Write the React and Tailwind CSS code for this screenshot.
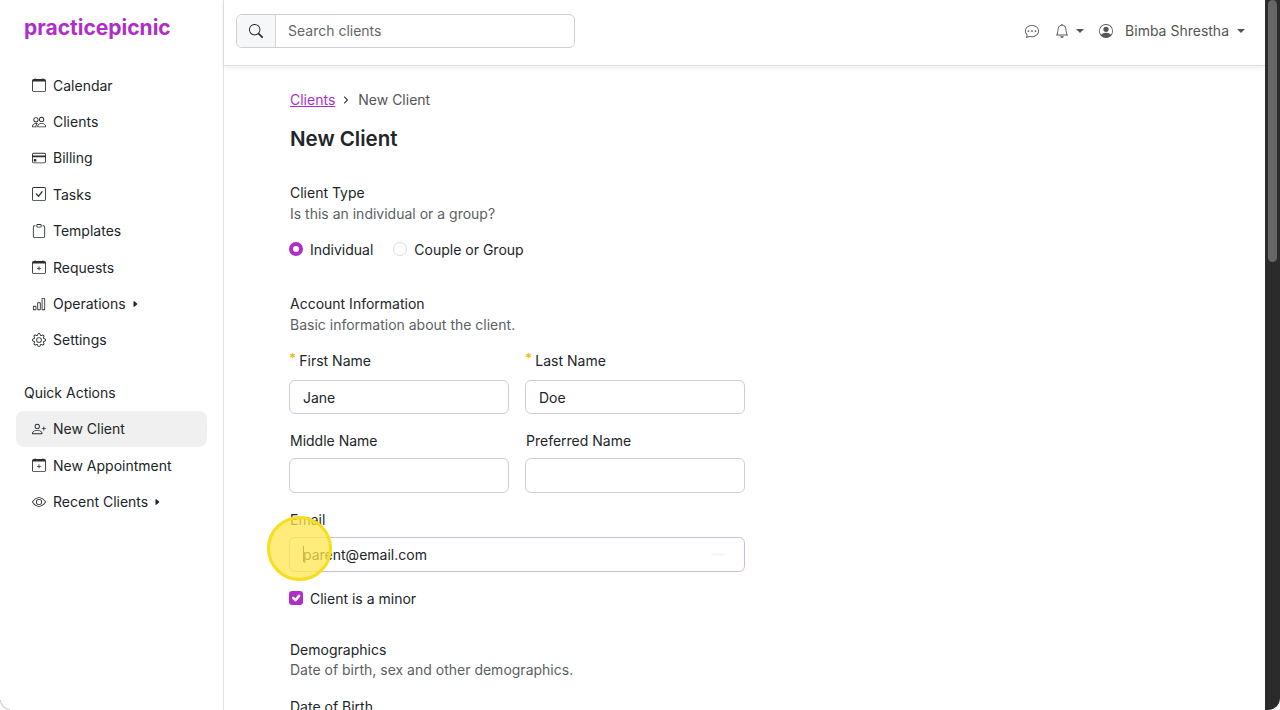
import React from "react";
import { BsCalendar, BsPeople, BsCreditCard, BsCheckSquare, BsClipboard, BsCalendarPlus, BsBarChart, BsGear, BsPersonPlus, BsEye, BsChatDots, BsBell, BsPersonCircle, BsSearch, BsCaretRightFill, BsChevronRight, BsCheck } from "react-icons/bs";

function NavRow({ icon: Icon, label, caret, active }) {
  return (
    <div className={"flex items-center h-[36.4px] pl-4 pr-2 rounded-lg " + (active ? "bg-[#f0f0f0]" : "")}>
      <Icon className="w-[14px] h-[14px] text-[#2b2f33] shrink-0" />
      <span className="ml-[7px] text-[14px] text-[#212529]">{label}</span>
      {caret && <BsCaretRightFill className="ml-[5px] w-[8px] h-[8px] text-[#212529]" />}
    </div>
  );
}

function Caret({ className }) {
  return <span className={"w-0 h-0 border-x-[4px] border-x-transparent border-t-[4px] border-t-[#555] " + className} />;
}

function Field({ label, required, value, inputClass }) {
  return (
    <div className="w-[220px]">
      <div className={"h-[22px] flex items-center text-[14px] text-[#212529] " + (required ? "" : "pl-px")}>
        {required && <span className="text-[#f5b921] mr-[3px] text-[13px] font-bold leading-none -mt-[3px]">*</span>}
        {label}
      </div>
      <input readOnly value={value} className={"block w-full px-[13px] text-[14px] text-[#212529] border border-[#cfcfcf] rounded-md bg-white outline-none " + inputClass} />
    </div>
  );
}

function Head({ title, desc, titleClass = "h-[21px]" }) {
  return (
    <div className="pl-px">
      <div className={"flex items-center text-[14px] text-[#212529] " + titleClass}>{title}</div>
      <div className="h-[21px] flex items-center text-[14px] text-[#5b5f63]">{desc}</div>
    </div>
  );
}

export default function App() {
  return (
    <div className="relative flex h-[710px] w-[1280px] overflow-hidden bg-white font-['Inter',sans-serif]">
      <aside className="w-[224px] shrink-0 border-r border-[#e2e2e2] px-4 pt-[14px]">
        <div className="pl-2 h-[28px] flex items-center text-[21px] font-bold text-[#b02ec8]">practicepicnic</div>
        <nav className="mt-[25px]">
          <NavRow icon={BsCalendar} label="Calendar" />
          <NavRow icon={BsPeople} label="Clients" />
          <NavRow icon={BsCreditCard} label="Billing" />
          <NavRow icon={BsCheckSquare} label="Tasks" />
          <NavRow icon={BsClipboard} label="Templates" />
          <NavRow icon={BsCalendarPlus} label="Requests" />
          <NavRow icon={BsBarChart} label="Operations" caret />
          <NavRow icon={BsGear} label="Settings" />
        </nav>
        <div className="mt-[23px] pl-2 h-[22px] flex items-center text-[14px] text-[#212529]">Quick Actions</div>
        <div className="mt-[7.6px]">
          <NavRow icon={BsPersonPlus} label="New Client" active />
          <NavRow icon={BsCalendarPlus} label="New Appointment" />
          <NavRow icon={BsEye} label="Recent Clients" caret />
        </div>
      </aside>

      <main className="flex-1 min-w-0 flex flex-col">
        <header className="h-[66px] shrink-0 border-b border-[#dedede] shadow-[0_2px_5px_rgba(0,0,0,0.07)] flex items-center justify-between pl-3 pr-[20px] pb-[4px]">
          <div className="flex w-[339px] h-[34px] border border-[#cfcfcf] rounded-md overflow-hidden">
            <div className="w-[39px] shrink-0 bg-[#f6f7f9] border-r border-[#d5d5d5] flex items-center justify-center">
              <BsSearch className="w-[14px] h-[14px] text-[#212529]" />
            </div>
            <input readOnly placeholder="Search clients" className="flex-1 min-w-0 pl-3 text-[14px] outline-none placeholder:text-[#666]" />
          </div>
          <div className="flex items-center text-[#555]">
            <BsChatDots className="w-[14px] h-[14px] translate-x-[1px]" />
            <BsBell className="ml-[17px] w-[14px] h-[14px]" />
            <Caret className="ml-[7px]" />
            <BsPersonCircle className="ml-[15px] w-[14px] h-[14px]" />
            <span className="ml-[12px] text-[14px] text-[#555]">Bimba Shrestha</span>
            <Caret className="ml-[8px]" />
          </div>
        </header>

        <div className="flex-1 min-h-0 overflow-hidden pl-[65px] pt-[23px]">
          <div className="pl-px h-[21px] flex items-center text-[14px] text-[#555]">
            <span className="text-[#b02ec8] underline">Clients</span>
            <BsChevronRight className="ml-[7px] mr-[8px] w-[8px] h-[8px] text-[#555]" strokeWidth="2" />
            <span>New Client</span>
          </div>
          <h1 className="pl-px mt-[14px] h-[30px] flex items-center text-[20.5px] font-semibold text-[#212529]">New Client</h1>

          <div className="mt-[28px]">
            <Head title="Client Type" desc="Is this an individual or a group?" />
          </div>
          <div className="mt-[14px] h-[22px] flex items-center text-[14px] text-[#212529]">
            <span className="w-[14px] h-[14px] rounded-full border-[4px] border-[#b02ec8] bg-white" />
            <span className="ml-[7px]">Individual</span>
            <span className="ml-[20px] w-[14px] h-[14px] rounded-full border border-[#dcdcdc]" />
            <span className="ml-[7px]">Couple or Group</span>
          </div>

          <div className="mt-[33px]">
            <Head title="Account Information" desc="Basic information about the client." />
          </div>
          <div className="mt-[14px] flex gap-4">
            <Field required label="First Name" value="Jane" inputClass="mt-[9px] h-[34px]" />
            <Field required label="Last Name" value="Doe" inputClass="mt-[9px] h-[34px]" />
          </div>
          <div className="mt-[15px] flex gap-4">
            <Field label="Middle Name" value="" inputClass="mt-[7px] h-[35px]" />
            <Field label="Preferred Name" value="" inputClass="mt-[7px] h-[35px]" />
          </div>
          <div className="mt-[15px] w-[456px]">
            <div className="pl-px h-[22px] flex items-center text-[14px] text-[#212529]">Email</div>
            <div className="relative mt-[7px]">
              <input readOnly value="parent@email.com" className="block w-full h-[35px] pb-[1px] px-[13px] text-[14px] text-[#212529] border border-[#d4bbdd] rounded-md bg-white outline-none" />
              <span className="absolute right-[20px] top-[16px] w-[14px] h-[3px] rounded-full bg-[#f7f7f7]" />
            </div>
          </div>
          <div className="mt-[15px] h-[22px] flex items-center text-[14px] text-[#212529]">
            <span className="w-[14px] h-[14px] rounded-[3px] bg-[#b02ec8] flex items-center justify-center">
              <BsCheck className="w-[14px] h-[14px] text-white" strokeWidth="1.5" />
            </span>
            <span className="ml-[7px]">Client is a minor</span>
          </div>

          <div className="mt-[30px]">
            <Head title="Demographics" desc="Date of birth, sex and other demographics." titleClass="h-[20px]" />
          </div>
          <div className="pl-px mt-[15px] h-[22px] flex items-center text-[14px] text-[#212529]">Date of Birth</div>
        </div>
      </main>

      <div className="w-[15px] shrink-0 bg-[#2b2b2b] rounded-br-xl px-[3px]">
        <div className="h-[262px] rounded-full bg-[#666]" />
      </div>

      {/* text caret and cursor highlight */}
      <span className="absolute left-[302.5px] top-[546px] w-px h-[16px] bg-[#333]" />
      <span className="absolute left-[267px] top-[516px] w-[65px] h-[65px] rounded-full bg-[#ffe64d]/75 border-[3px] border-[#f6dd1e]" />
      {/* window corner */}
      <span className="absolute left-0 bottom-0 w-[10px] h-[10px] border-l border-b border-[#cccccc] rounded-bl-[10px]" />
    </div>
  );
}
